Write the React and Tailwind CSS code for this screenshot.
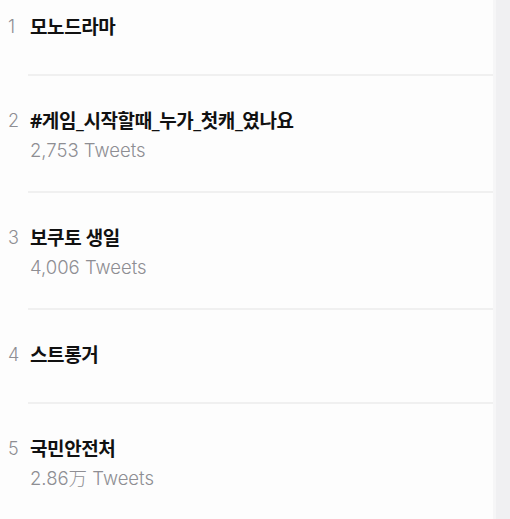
import React from "react";

const rows = [
  { n: 1, title: "모노드라마" },
  { n: 2, title: "#게임_시작할때_누가_첫캐_였나요", count: "2,753 Tweets" },
  { n: 3, title: "보쿠토 생일", count: "4,006 Tweets" },
  { n: 4, title: "스트롱거" },
  { n: 5, title: "국민안전처", count: "2.86万 Tweets" },
];

export default function App() {
  return (
    <div
      className="w-[510px] h-[519px] overflow-hidden bg-[#fdfdfd] flex"
      style={{ fontFamily: '"Noto Sans", "Noto Sans CJK KR", sans-serif' }}
    >
      <div className="flex-1 flex flex-col mt-[-18px]">
        {rows.map((r) => (
          <div key={r.n} className="flex flex-col">
            <div
              className={
                "flex pt-[34px] " + (r.count ? "pb-[30px]" : "pb-[36px]")
              }
            >
              <div
                className="w-[30px] pl-[8px] text-[18px] leading-[22px] text-[#8e8e93] font-light"
                style={{ fontFamily: 'Inter, "Noto Sans", sans-serif' }}
              >
                {r.n}
              </div>
              <div className="flex flex-col">
                <div className="text-[19px] leading-[22px] font-bold text-[#111] tracking-[-0.4px]">
                  {r.title}
                </div>
                {r.count && (
                  <div
                    className="mt-[7px] text-[18.5px] leading-[22px] text-[#8e8e93] font-light"
                    style={{ fontFamily: 'Inter, "Noto Sans CJK KR", sans-serif' }}
                  >
                    {r.count}
                  </div>
                )}
              </div>
            </div>
            <div className="ml-[28px] h-[2px] bg-[#f0f0f0]" />
          </div>
        ))}
      </div>
      <div className="w-[17px] bg-[#f0f0f2] border-l-[3px] border-[#f6f6f7]" />
    </div>
  );
}
